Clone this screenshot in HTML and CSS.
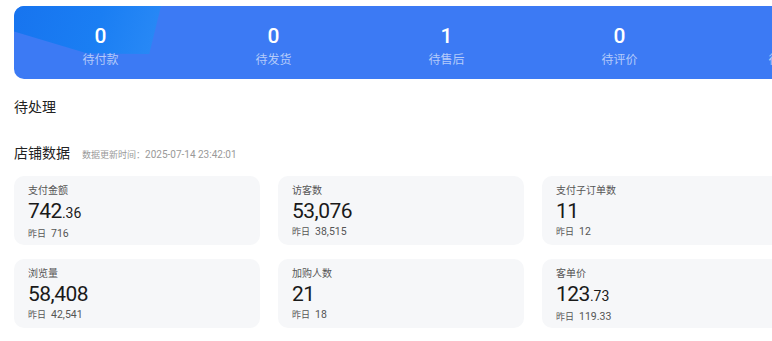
FILE: index.html
```html
<!DOCTYPE html>
<html lang="zh-CN">
<head>
<meta charset="utf-8"/>
<meta content="width=device-width, initial-scale=1" name="viewport"/>
<title>店铺概况</title>
<link rel="stylesheet" href="styles.css">
</head>
<body>
<div class="page">
  <div class="order-bar">
    <div class="order-deco"></div>
    <div class="order-item"><div class="order-num">0</div><div class="order-label">待付款</div></div>
    <div class="order-item"><div class="order-num">0</div><div class="order-label">待发货</div></div>
    <div class="order-item"><div class="order-num">1</div><div class="order-label">待售后</div></div>
    <div class="order-item"><div class="order-num">0</div><div class="order-label">待评价</div></div>
    <div class="order-item"><div class="order-num">0</div><div class="order-label">待确认单</div></div>
  </div>

  <h2 class="section-title">待处理</h2>

  <div class="data-head">
    <h2>店铺数据</h2>
    <span class="update-time">数据更新时间：<span class="update-date">2025-07-14 23:42:01</span></span>
  </div>

  <div class="stats">
    <div class="stat-card">
      <div class="stat-label">支付金额</div>
      <div class="stat-value">742<small>.36</small></div>
      <div class="stat-prev"><span>昨日</span>716</div>
    </div>
    <div class="stat-card">
      <div class="stat-label">访客数</div>
      <div class="stat-value">53,076</div>
      <div class="stat-prev"><span>昨日</span>38,515</div>
    </div>
    <div class="stat-card">
      <div class="stat-label">支付子订单数</div>
      <div class="stat-value">11</div>
      <div class="stat-prev"><span>昨日</span>12</div>
    </div>
    <div class="stat-card">
      <div class="stat-label">浏览量</div>
      <div class="stat-value">58,408</div>
      <div class="stat-prev"><span>昨日</span>42,541</div>
    </div>
    <div class="stat-card">
      <div class="stat-label">加购人数</div>
      <div class="stat-value">21</div>
      <div class="stat-prev"><span>昨日</span>18</div>
    </div>
    <div class="stat-card">
      <div class="stat-label">客单价</div>
      <div class="stat-value">123<small>.73</small></div>
      <div class="stat-prev"><span>昨日</span>119.33</div>
    </div>
  </div>
</div>
</body>
</html>
```

FILE: styles.css
```css
body {
  margin: 0;
  background: #fff;
  font-family: Roboto, "Noto Sans CJK SC", sans-serif;
  color: #222;
  overflow: hidden;
}
.page {
  padding: 6px 0 0 14px;
  width: 880px;
}
.order-bar {
  position: relative;
  display: flex;
  width: 865px;
  height: 73px;
  background: #3c7af4;
  border-radius: 10px;
  overflow: hidden;
}
.order-deco {
  position: absolute;
  top: 0;
  left: 0;
  width: 147px;
  height: 48px;
  background: linear-gradient(110deg, #1774ef, #1a7ef3 55%, #2a8af6);
  clip-path: polygon(0 0, 100% 0, 92% 100%, 50% 99%, 0 53%);
}
.order-item {
  position: relative;
  flex: 1;
  text-align: center;
  padding-top: 17px;
}
.order-num {
  color: #fff;
  font-size: 21px;
  font-weight: 500;
  line-height: 26px;
}
.order-label {
  color: #b4cbfa;
  font-size: 12px;
  line-height: 18px;
  margin-top: 2px;
}
.section-title {
  margin: 17px 0 0;
  font-size: 14px;
  font-weight: 400;
  line-height: 22px;
  color: #222;
}
.data-head {
  display: flex;
  align-items: baseline;
  gap: 12px;
  margin-top: 23px;
}
.data-head h2 {
  margin: 0;
  font-size: 14px;
  font-weight: 400;
  line-height: 24px;
  color: #222;
}
.update-time {
  font-size: 9px;
  color: #999;
}
.update-date {
  font-size: 10px;
}
.stats {
  display: grid;
  grid-template-columns: repeat(3, 246px);
  column-gap: 18px;
  row-gap: 14px;
  margin-top: 11px;
}
.stat-card {
  background: #f6f7f9;
  border-radius: 10px;
  height: 69px;
  box-sizing: border-box;
  padding: 8px 14px 0;
}
.stat-label {
  font-size: 10px;
  line-height: 14px;
  color: #555;
}
.stat-value {
  font-size: 21px;
  line-height: 26px;
  letter-spacing: -0.5px;
  color: #1a1a1a;
}
.stat-value small {
  font-size: 14px;
  letter-spacing: 0;
}
.stat-prev {
  font-size: 10.5px;
  line-height: 14px;
  color: #555;
  margin-top: 1px;
}
.stat-prev span {
  font-size: 9px;
  margin-right: 5px;
}
```
